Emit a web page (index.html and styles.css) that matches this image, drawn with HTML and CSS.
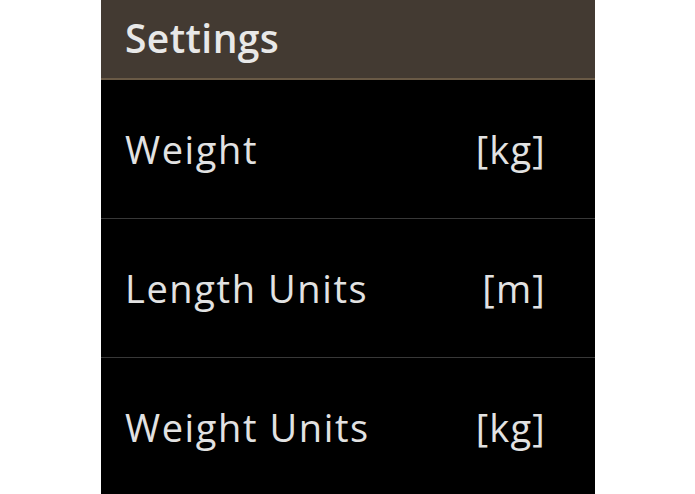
FILE: index.html
```html
<!DOCTYPE html>
<html>
<head>
<meta charset="utf-8">
<link rel="stylesheet" href="styles.css">
</head>
<body>
<div class="panel">
  <div class="header">Settings</div>
  <div class="row"><span class="label">Weight</span><span class="value">[kg]</span></div>
  <div class="row"><span class="label">Length Units</span><span class="value">[m]</span></div>
  <div class="row last"><span class="label">Weight Units</span><span class="value">[kg]</span></div>
</div>
</body>
</html>
```
FILE: styles.css
```css
html, body {
  margin: 0;
  padding: 0;
  background: #ffffff;
  height: 100%;
  overflow: hidden;
}
body {
  display: flex;
  justify-content: center;
  font-family: "Open Sans", "DejaVu Sans", sans-serif;
}
.panel {
  width: 494px;
  margin-left: 1px;
  background: #000000;
  display: flex;
  flex-direction: column;
  height: 494px;
  overflow: hidden;
}
.header {
  flex-shrink: 0;
  height: 80px;
  box-sizing: border-box;
  background: #433a32;
  border-bottom: 2px solid #6a5a46;
  color: #e8e8e8;
  font-size: 39px;
  font-weight: 600;
  letter-spacing: 0.4px;
  padding: 0 0 4px 24px;
  display: flex;
  align-items: center;
}
.row {
  flex-shrink: 0;
  height: 138px;
  border-bottom: 1px solid #383838;
  display: flex;
  align-items: center;
  justify-content: space-between;
  padding: 0 49px 0 24px;
  color: #e2e2e2;
  font-size: 38px;
  letter-spacing: 1.6px;
}
.row.last {
  border-bottom: none;
}
.value {
  letter-spacing: 1.2px;
}
```
